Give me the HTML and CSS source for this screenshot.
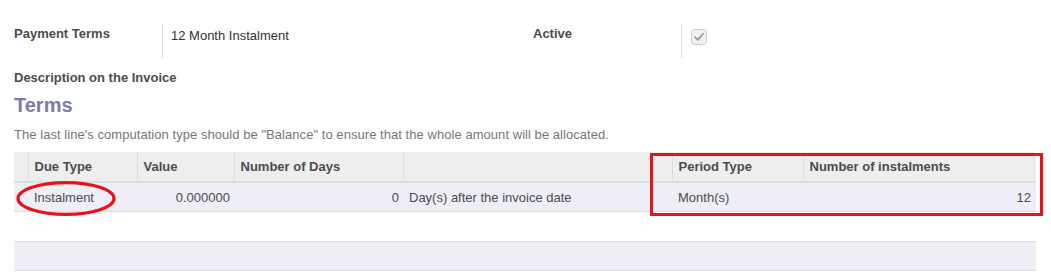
FILE: index.html
```html
<!DOCTYPE html>
<html lang="en">
<head>
  <meta charset="UTF-8" />
  <title>Payment Terms</title>
  <link rel="stylesheet" href="styles.css">
</head>
<body>
  <div class="sheet">
    <div class="form-grid">
      <div class="field">
        <div class="field-label">Payment Terms</div>
        <div class="field-value">12 Month Instalment</div>
      </div>
      <div class="field">
        <div class="field-label">Active</div>
        <div class="field-value check">
          <svg width="16" height="16" viewBox="0 0 16 16">
            <rect x="0.5" y="0.5" width="15" height="15" rx="3" fill="#f1f1f1" stroke="#c9c9c9" />
            <path d="M4 8.2 L6.8 10.8 L12 5" fill="none" stroke="#9e949c" stroke-width="1.8" stroke-linecap="round" stroke-linejoin="round" />
          </svg>
        </div>
      </div>
    </div>

    <div class="desc-label">Description on the Invoice</div>
    <h2 class="section-title">Terms</h2>
    <p class="help">The last line's computation type should be "Balance" to ensure that the whole amount will be allocated.</p>

    <div class="list">
      <table class="list-table">
        <colgroup>
          <col style="width: 14px">
          <col style="width: 109px">
          <col style="width: 97px">
          <col style="width: 169px">
          <col style="width: 269px">
          <col style="width: 131px">
          <col style="width: 233px">
        </colgroup>
        <thead>
          <tr>
            <th class="selector"></th>
            <th>Due Type</th>
            <th>Value</th>
            <th>Number of Days</th>
            <th></th>
            <th>Period Type</th>
            <th>Number of instalments</th>
          </tr>
        </thead>
        <tbody>
          <tr class="odd">
            <td></td>
            <td>Instalment</td>
            <td class="num">0.000000</td>
            <td class="num">0</td>
            <td>Day(s) after the invoice date</td>
            <td>Month(s)</td>
            <td class="num last">12</td>
          </tr>
          <tr class="even">
            <td></td><td></td><td></td><td></td><td></td><td></td><td></td>
          </tr>
          <tr class="odd">
            <td></td><td></td><td></td><td></td><td></td><td></td><td></td>
          </tr>
        </tbody>
      </table>

      <svg class="mark-ellipse" width="100" height="35" viewBox="0 0 100 35">
        <ellipse cx="50" cy="17.5" rx="48" ry="15.8" fill="none" stroke="#e8121b" stroke-width="3.2" />
      </svg>
      <div class="mark-box"></div>
    </div>
  </div>
</body>
</html>
```

FILE: styles.css
```css
body {
  margin: 0;
  font-family: 'Liberation Sans', Arial, sans-serif;
  font-size: 13px;
  line-height: 18px;
  color: #4c4c4c;
  background: #fff;
}

.sheet {
  width: 1022px;
  padding: 24px 0 0 14px;
}

.form-grid {
  display: grid;
  grid-template-columns: 519px 503px;
}

.field {
  display: flex;
  height: 34px;
}

.field-label {
  width: 148px;
  border-right: 1px solid #dddddd;
  font-weight: 700;
  padding-top: 1px;
}

.field-value {
  padding: 3px 0 0 8px;
  color: #333;
}

.field-value.check {
  padding: 5px 0 0 9px;
}

.field-value.check svg {
  display: block;
}

.desc-label {
  margin-top: 11px;
  font-weight: 700;
}

.section-title {
  margin: 6px 0 0;
  font-size: 20px;
  line-height: 24px;
  font-weight: 700;
  color: #7c7bad;
}

.help {
  margin: 9px 0 0;
  color: #777;
  letter-spacing: 0.05px;
}

.list {
  position: relative;
  margin-top: 8px;
}

.list-table {
  width: 1022px;
  table-layout: fixed;
  border-collapse: collapse;
}

.list-table th {
  height: 29px;
  padding: 0 6px;
  background: #eeeeee;
  border-left: 1px solid #dddddd;
  border-bottom: 2px solid #dddddd;
  text-align: left;
  font-weight: 700;
  white-space: nowrap;
}

.list-table th.selector {
  border-left: none;
}

.list-table td {
  height: 27px;
  padding: 1px 6px 0;
  border-bottom: 1px solid #dddddd;
  white-space: nowrap;
}

.list-table tr.odd td {
  background: #eeeef6;
}

.list-table tr.even td {
  height: 28px;
}

.list-table td.num {
  text-align: right;
  padding-right: 4px;
}

.list-table td.num.last {
  padding-right: 5px;
}

.mark-ellipse {
  position: absolute;
  left: 2px;
  top: 29px;
}

.mark-box {
  position: absolute;
  left: 636px;
  top: 1px;
  width: 393px;
  height: 63px;
  box-sizing: border-box;
  border: 3px solid #e8121b;
}
```
